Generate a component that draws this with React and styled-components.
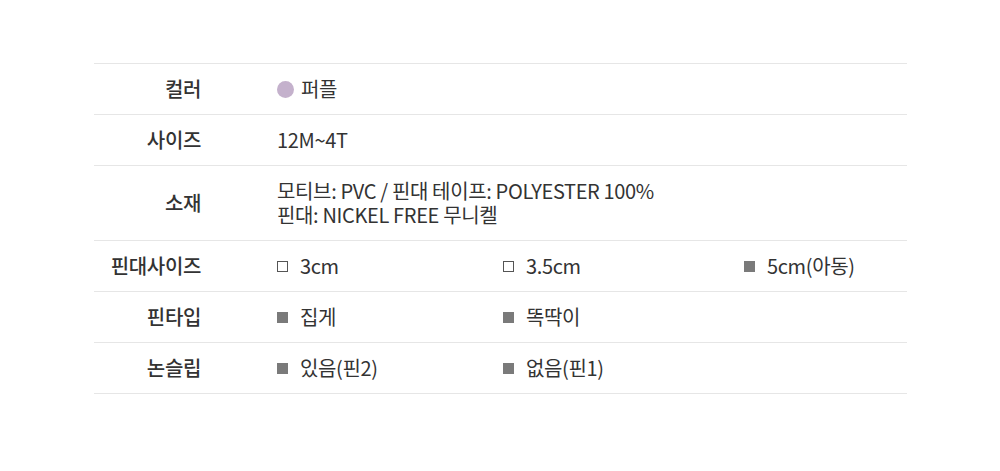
import React from "react";
import styled, { createGlobalStyle } from "styled-components";

const GlobalStyle = createGlobalStyle`
  html, body {
    margin: 0;
    padding: 0;
    background: #ffffff;
  }
  body {
    font-family: "Noto Sans CJK KR", "Noto Sans", sans-serif;
    color: #333333;
  }
`;

const rows = [
  { label: "컬러", type: "color", value: "퍼플", swatch: "#c4b1cc" },
  { label: "사이즈", type: "text", lines: ["12M~4T"] },
  {
    label: "소재",
    type: "text",
    lines: ["모티브: PVC / 핀대 테이프: POLYESTER 100%", "핀대: NICKEL FREE 무니켈"],
  },
  {
    label: "핀대사이즈",
    type: "options",
    options: [
      { text: "3cm", checked: false },
      { text: "3.5cm", checked: false },
      { text: "5cm(아동)", checked: true },
    ],
  },
  {
    label: "핀타입",
    type: "options",
    options: [
      { text: "집게", checked: true },
      { text: "똑딱이", checked: true },
    ],
  },
  {
    label: "논슬립",
    type: "options",
    options: [
      { text: "있음(핀2)", checked: true },
      { text: "없음(핀1)", checked: true },
    ],
  },
];

const App = () => {
  return (
    <>
      <GlobalStyle />
      <Page>
        <SpecTable>
          {rows.map((row) => (
            <SpecRow key={row.label}>
              <SpecLabel>{row.label}</SpecLabel>
              {row.type === "color" && (
                <ColorValue>
                  <Swatch color={row.swatch} />
                  {row.value}
                </ColorValue>
              )}
              {row.type === "text" && (
                <TextValue>
                  {row.lines.map((line) => (
                    <TextLine key={line}>{line}</TextLine>
                  ))}
                </TextValue>
              )}
              {row.type === "options" && (
                <OptionGrid>
                  {row.options.map((opt) => (
                    <Option key={opt.text}>
                      <Box checked={opt.checked} />
                      {opt.text}
                    </Option>
                  ))}
                </OptionGrid>
              )}
            </SpecRow>
          ))}
        </SpecTable>
      </Page>
    </>
  );
};

const Page = styled.div`
  width: 1000px;
  height: 471px;
  padding: 63px 93px 0 94px;
  box-sizing: border-box;
`;

const SpecTable = styled.div`
  border-top: 1px solid #e6e6e6;
`;

const SpecRow = styled.div`
  display: grid;
  grid-template-columns: 107px 1fr;
  column-gap: 76px;
  align-items: center;
  padding: 13px 0;
  border-bottom: 1px solid #e6e6e6;
  font-size: 20px;
  line-height: 24px;
  letter-spacing: -0.35px;
`;

const SpecLabel = styled.div`
  text-align: right;
  font-weight: 500;
  color: #333333;
`;

const TextValue = styled.div`
  font-weight: 400;
  color: #333333;
`;

const TextLine = styled.div`
  height: 24px;
`;

const ColorValue = styled.div`
  display: flex;
  align-items: center;
  gap: 7px;
`;

const Swatch = styled.span`
  width: 17px;
  height: 17px;
  border-radius: 50%;
  background: ${(props) => props.color};
`;

const OptionGrid = styled.div`
  display: grid;
  grid-template-columns: 226px 241px 1fr;
`;

const Option = styled.div`
  display: flex;
  align-items: center;
  gap: 12px;
`;

const Box = styled.span`
  width: 11px;
  height: 11px;
  box-sizing: border-box;
  background: ${(props) => (props.checked ? "#7a7a7a" : "#ffffff")};
  border: 1px solid ${(props) => (props.checked ? "#7a7a7a" : "#555555")};
`;

export default App;
